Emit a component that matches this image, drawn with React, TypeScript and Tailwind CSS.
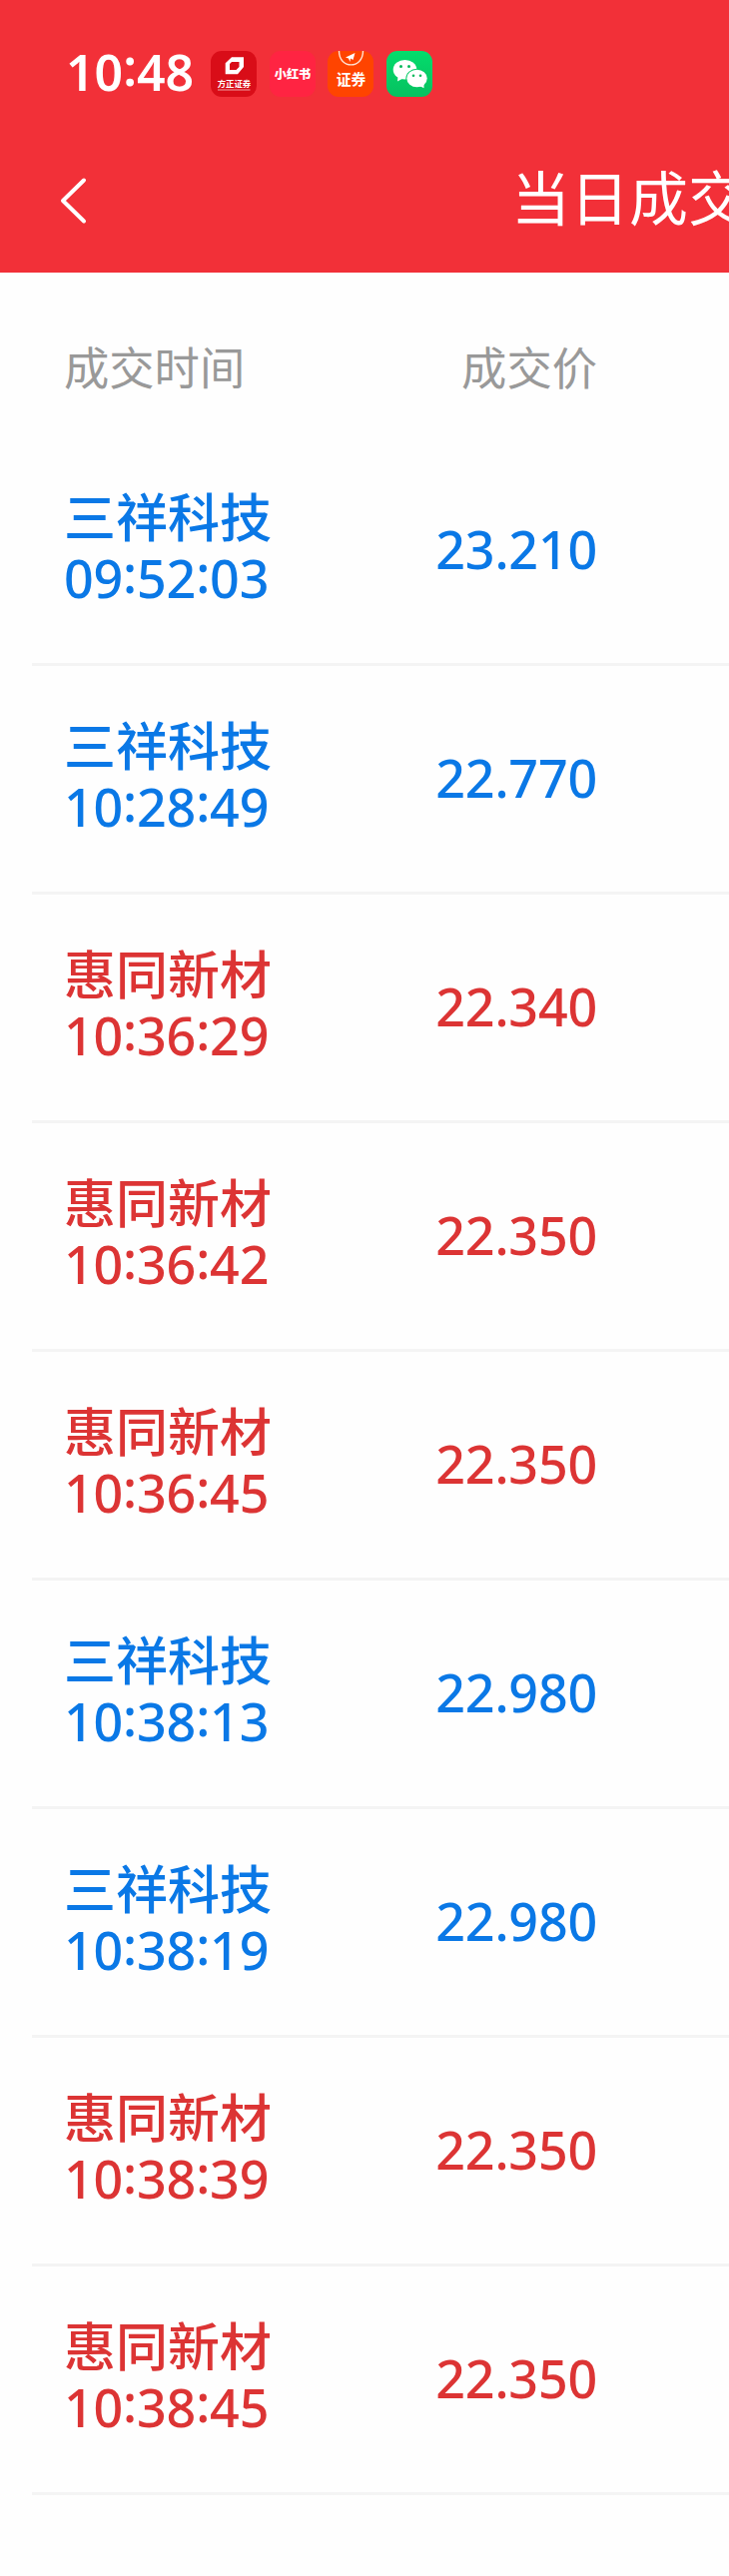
import { Fragment } from "react";
import clsx from "clsx";

type Side = "buy" | "sell";

interface Trade {
  name: string;
  time: string;
  price: string;
  side: Side;
}

const TRADES: Trade[] = [
  { name: "三祥科技", time: "09:52:03", price: "23.210", side: "sell" },
  { name: "三祥科技", time: "10:28:49", price: "22.770", side: "sell" },
  { name: "惠同新材", time: "10:36:29", price: "22.340", side: "buy" },
  { name: "惠同新材", time: "10:36:42", price: "22.350", side: "buy" },
  { name: "惠同新材", time: "10:36:45", price: "22.350", side: "buy" },
  { name: "三祥科技", time: "10:38:13", price: "22.980", side: "sell" },
  { name: "三祥科技", time: "10:38:19", price: "22.980", side: "sell" },
  { name: "惠同新材", time: "10:38:39", price: "22.350", side: "buy" },
  { name: "惠同新材", time: "10:38:45", price: "22.350", side: "buy" },
];

// ── Time with the colons lifted to the middle of the digits ──────────────────
function Clock({ value }: { value: string }) {
  return value.split(":").map((part, i) => (
    <Fragment key={i}>
      {i > 0 && <span className="relative -top-[5px]">:</span>}
      {part}
    </Fragment>
  ));
}

// ── Status bar app icons ─────────────────────────────────────────────────────
function FounderIcon() {
  return (
    <svg className="size-[46px]" viewBox="0 0 46 46">
      <rect width="46" height="46" rx="11" fill="#d90d18" />
      <path
        fillRule="evenodd"
        fill="#fff"
        d="M21 6.300H33V16L27 23.300H14.700V12.300ZM21 11L19 13V19H25.500L28.500 16V11Z"
      />
      <text x="23.500" y="35.500" textAnchor="middle" fontSize="8.400" fontWeight="700" fill="#fff">
        方正证券
      </text>
      <path d="M7 39H39.500" stroke="#fff" strokeOpacity=".6" strokeWidth="1.200" />
    </svg>
  );
}

function RedNoteIcon() {
  return (
    <svg className="size-[46px]" viewBox="0 0 46 46">
      <rect width="46" height="46" rx="11" fill="#ff2442" />
      <text x="23" y="27.800" textAnchor="middle" fontSize="12.200" fontWeight="900" fill="#fff">
        小红书
      </text>
    </svg>
  );
}

function SecuritiesIcon() {
  return (
    <svg className="size-[46px]" viewBox="0 0 46 46">
      <rect width="46" height="46" rx="11" fill="#ff4400" />
      <path d="M11.500 0C11.500 18.500 35.500 18.500 35.500 0" fill="none" stroke="#ffe3d6" strokeWidth="1.400" />
      <path d="M18 6.500L27.500 2L25.500 9L23 7.500L22.500 11L21 7.500Z" fill="#fff" />
      <text x="23.500" y="34" textAnchor="middle" fontSize="14.800" fontWeight="700" fill="#fff">
        证券
      </text>
    </svg>
  );
}

function WeChatIcon() {
  return (
    <svg className="size-[46px]" viewBox="0 0 46 46">
      <defs>
        <linearGradient id="wechat" x1="0" y1="0" x2="0" y2="1">
          <stop offset="0" stopColor="#04dc6c" />
          <stop offset="1" stopColor="#06c160" />
        </linearGradient>
      </defs>
      <rect width="46" height="46" rx="11" fill="url(#wechat)" />
      <path d="M11.500 25L11 30.500L16.500 27.500Z" fill="#fff" />
      <ellipse cx="18.500" cy="18.700" rx="11.800" ry="9.800" fill="#fff" />
      <circle cx="14.500" cy="15.500" r="1.500" fill="#06b85a" />
      <circle cx="22.500" cy="15.500" r="1.500" fill="#06b85a" />
      <ellipse cx="30.500" cy="27.500" rx="11.200" ry="9.700" fill="#06cb65" />
      <path d="M33 35L37.500 37.300L37.500 32Z" fill="#fff" />
      <ellipse cx="30.500" cy="27.500" rx="10.200" ry="8.700" fill="#fff" />
      <circle cx="27" cy="24.800" r="1.300" fill="#06b85a" />
      <circle cx="34" cy="24.800" r="1.300" fill="#06b85a" />
    </svg>
  );
}

function TradeRow({ trade }: { trade: Trade }) {
  return (
    <li
      className={clsx(
        "ml-8 flex h-[229px] items-center border-b-3 border-[#f4f4f4] pb-[3px] pl-8 text-[52px] font-medium",
        trade.side === "buy" ? "text-[#dc3434]" : "text-[#0a78e6]",
      )}
    >
      <div className="w-[280px] pb-[3px] leading-[61px]">
        <p>{trade.name}</p>
        <p className="tracking-[-0.2px]">
          <Clock value={trade.time} />
        </p>
      </div>
      <p className="w-[254px] text-right tracking-[-0.2px]">{trade.price}</p>
    </li>
  );
}

export default function App() {
  return (
    <div className="h-[2580px] w-[730px] overflow-hidden bg-[#fefefe] font-['Noto_Sans','Noto_Sans_CJK_SC',sans-serif]">
      <header className="h-[273px] bg-[#f23038] text-white">
        <div className="flex h-[148px] items-center pl-[66px]">
          <span className="w-[145px] pb-[3px] text-[50px] font-semibold">
            <Clock value="10:48" />
          </span>
          <div className="flex gap-[12.500px]">
            <FounderIcon />
            <RedNoteIcon />
            <SecuritiesIcon />
            <WeChatIcon />
          </div>
        </div>
        <div className="flex h-[106px] items-center pl-[58px]">
          <svg
            className="h-[50px] w-8 shrink-0"
            viewBox="0 0 32 50"
            fill="none"
            stroke="#fff"
            strokeWidth="4"
            strokeLinecap="round"
            strokeLinejoin="round"
          >
            <path d="M26 4.500L5 25L26 45.500" />
          </svg>
          <h1 className="ml-[422px] shrink-0 pb-[5px] text-[59px] whitespace-nowrap">当日成交</h1>
        </div>
      </header>

      <div className="flex h-[165px] items-center pt-[26px] pl-16 text-[45.300px] text-[#999999]">
        <span className="w-[280px]">成交时间</span>
        <span className="w-[254px] text-right">成交价</span>
      </div>

      <ul>
        {TRADES.map((trade) => (
          <TradeRow key={trade.time} trade={trade} />
        ))}
      </ul>
    </div>
  );
}
